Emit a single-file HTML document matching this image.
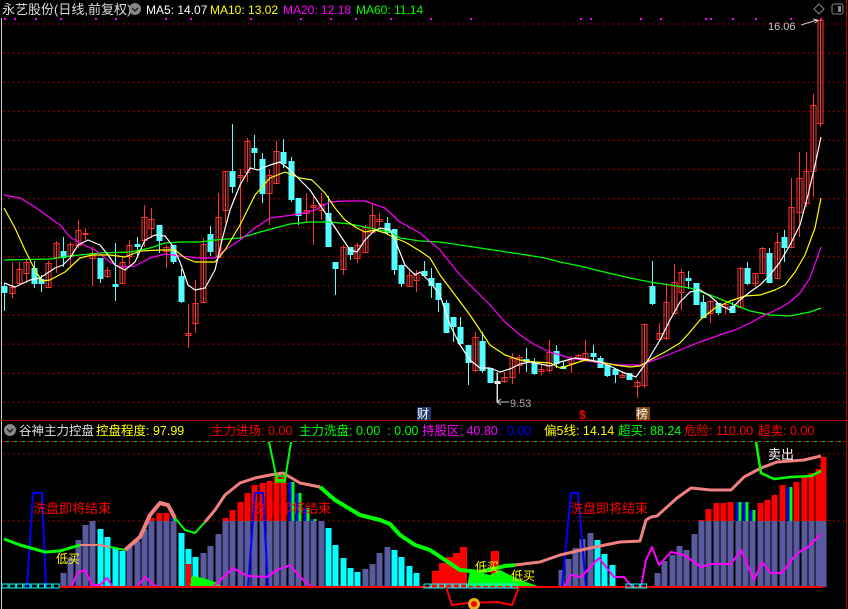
<!DOCTYPE html>
<html><head><meta charset="utf-8">
<style>
html,body{margin:0;padding:0;background:#000;width:848px;height:609px;overflow:hidden}
svg{display:block}
text{font-family:"Liberation Sans","Noto Sans CJK SC",sans-serif}
</style></head>
<body>
<svg id="s" width="848" height="609" viewBox="0 0 848 609" xmlns="http://www.w3.org/2000/svg">
<rect width="848" height="609" fill="#000"/>
<line x1="1.5" y1="18" x2="1.5" y2="609" stroke="#ccc" stroke-width="1"/>
<line x1="846.5" y1="0" x2="846.5" y2="609" stroke="#a00" stroke-width="1"/>
<g id="grid"></g>
<g id="main"></g>
<g id="ind"></g>
<!-- header -->
<text x="2" y="14" font-size="13" fill="#ddd">永艺股份(日线,前复权)</text>
<circle cx="135" cy="9" r="6" fill="#888"/><path d="M132 8l3 3 3-3" stroke="#222" stroke-width="1.5" fill="none"/>
<text x="146" y="14" font-size="12" fill="#fff">MA5: 14.07</text>
<text x="210" y="14" font-size="12" fill="#ff0">MA10: 13.02</text>
<text x="283" y="14" font-size="12" fill="#f0f">MA20: 12.18</text>
<text x="356" y="14" font-size="12" fill="#0f0">MA60: 11.14</text>
<path d="M819 4l5 5-5 5-5-5z" stroke="#888" fill="none"/>
<rect x="832" y="4" width="11" height="10" rx="2" stroke="#888" fill="none"/><rect x="838" y="6" width="3" height="6" fill="#888"/>
<text x="768" y="30" font-size="11" fill="#ccc">16.06</text>
<path d="M801 25l16-5M813 19l5 1-3 3" stroke="#ccc" fill="none"/>
<path d="M497 372v30h12M501 399l-4 3 4 3" stroke="#ccc" fill="none"/>
<text x="510" y="407" font-size="11" fill="#aaa">9.53</text>
<rect x="417" y="407" width="14" height="13" fill="#1c3a6a"/><text x="417" y="418" font-size="12" fill="#fff">财</text>
<text x="579" y="419" font-size="12" fill="#f00" font-weight="bold">$</text>
<rect x="636" y="407" width="14" height="13" fill="#7a4a10"/><text x="636" y="418" font-size="12" fill="#fff">榜</text>
<!-- indicator header -->
<line x1="0" y1="420.5" x2="848" y2="420.5" stroke="#b00"/>
<circle cx="10" cy="430" r="6" fill="#888"/><path d="M7 429l3 3 3-3" stroke="#222" stroke-width="1.5" fill="none"/>
<text x="19" y="435" font-size="12.5" fill="#ddd">谷神主力控盘</text>
<text x="96" y="435" font-size="12.5" fill="#ff0">控盘程度: 97.99</text>
<text x="211" y="435" font-size="12.5" fill="#f00">主力进场: 0.00</text>
<text x="299" y="435" font-size="12.5" fill="#0f0">主力洗盘: 0.00 &#160;: 0.00</text>
<text x="422" y="435" font-size="12.5" fill="#f0f">持股区: 40.80</text>
<text x="500" y="435" font-size="12.5" fill="#00f">: 0.00</text>
<text x="544" y="435" font-size="12.5" fill="#ff0">偏5线: 14.14</text>
<text x="618" y="435" font-size="12.5" fill="#0f0">超买: 88.24</text>
<text x="684" y="435" font-size="12.5" fill="#f00">危险: 110.00</text>
<text x="758" y="435" font-size="12.5" fill="#f00">超卖: 0.00</text>
<g id="txt">
<text x="33" y="513" font-size="13" fill="#f00">洗盘即将结束</text>
<text x="253" y="513" font-size="13" fill="#f00">洗盘即将结束</text>
<text x="570" y="513" font-size="13" fill="#f00">洗盘即将结束</text>
<text x="56" y="563" font-size="12" fill="#ff0">低买</text>
<text x="475" y="571" font-size="12" fill="#ff0">低买</text>
<text x="511" y="580" font-size="12" fill="#ff0">低买</text>
<text x="768" y="459" font-size="13" fill="#fff">卖出</text>
</g>
</svg>
<script>
var NS="http://www.w3.org/2000/svg";
function el(p,t,a){var e=document.createElementNS(NS,t);for(var k in a)e.setAttribute(k,a[k]);document.getElementById(p).appendChild(e);return e;}
// grid
for(var k=0;k<14;k++){var y=24+k*29.1;el("grid","line",{x1:3,x2:846,y1:y,y2:y,stroke:"#c00","stroke-dasharray":"1.5 3.5","stroke-width":1});}
[454,521].forEach(function(y){el("grid","line",{x1:3,x2:846,y1:y,y2:y,stroke:"#c00","stroke-dasharray":"1.5 3.5"});});
el("grid","line",{x1:3,x2:846,y1:441.5,y2:441.5,stroke:"#c00","stroke-dasharray":"5 3"});
el("grid","line",{x1:6,x2:846,y1:441.5,y2:441.5,stroke:"#0c0","stroke-dasharray":"3 5"});
// magenta top dots
[4,14,35,60,95,115,165,190,250,300,330,355,390,430,470,580,590,640,660,705,710,732,755,790,820].forEach(function(x){el("grid","rect",{x:x,y:18,width:2,height:2,fill:"#f0f"});});
// candles: [x, bodyTop, bodyBot, high, low, type] type r=red c=cyan w=white
var C=[[4,286,292,283,311,"c"],[12,287,293,262,298,"r"],[19,269,283,262,283,"r"],[26,262,273,258,283,"r"],[34,268,283,261,288,"c"],[41,279,283,275,292,"c"],[48,263,287,261,287,"r"],[56,243,257,241,273,"r"],[63,251,257,237,267,"c"],[70,244,256,242,266,"r"],[78,230,245,220,248,"r"],[85,233,234,228,240,"r"],[92,253,258,247,286,"r"],[100,258,278,258,283,"c"],[107,270,276,267,278,"r"],[115,284,286,243,301,"c"],[122,262,283,257,283,"r"],[129,245,256,240,265,"r"],[137,244,246,237,258,"c"],[144,217,240,205,247,"r"],[151,219,228,208,238,"r"],[159,225,240,225,253,"c"],[166,247,251,245,268,"r"],[173,245,261,245,264,"c"],[181,276,301,269,303,"c"],[188,333,335,304,348,"r"],[195,303,323,280,333,"r"],[203,244,302,238,302,"r"],[210,234,251,226,256,"c"],[218,217,257,193,257,"r"],[225,171,210,171,223,"r"],[232,171,186,124,193,"c"],[240,175,177,169,240,"r"],[247,141,172,138,182,"r"],[254,148,152,135,168,"c"],[262,159,193,153,203,"c"],[269,175,193,169,225,"r"],[276,151,183,141,183,"r"],[283,152,163,139,168,"c"],[291,161,199,157,202,"c"],[298,198,215,198,225,"c"],[306,210,213,193,223,"r"],[313,205,207,195,245,"r"],[321,204,210,193,220,"r"],[328,213,246,196,246,"c"],[335,262,268,262,295,"c"],[343,247,269,245,275,"r"],[350,247,254,247,260,"c"],[357,245,258,243,263,"r"],[365,227,252,225,252,"r"],[372,215,232,203,232,"r"],[379,219,221,213,226,"r"],[387,223,232,217,234,"c"],[394,229,269,229,275,"c"],[401,265,283,265,287,"c"],[409,275,286,270,287,"r"],[416,273,280,270,292,"r"],
[424,271,275,261,275,"c"],[431,278,285,268,298,"c"],[438,283,299,283,312,"c"],[446,303,332,300,332,"c"],[453,317,326,317,342,"c"],[460,327,343,317,345,"c"],[468,345,362,345,385,"c"],[475,337,370,332,372,"r"],[482,341,370,332,373,"c"],[490,368,382,368,383,"c"],[497,381,383,373,403,"w"],[504,377,381,372,383,"r"],[512,358,377,353,384,"r"],[519,357,365,355,373,"r"],[526,359,361,348,372,"c"],[534,363,373,358,375,"c"],[541,369,371,365,375,"r"],[549,352,370,340,372,"r"],[556,351,363,345,368,"c"],[563,366,368,362,369,"c"],[571,358,363,356,373,"r"],[578,355,358,354,359,"r"],[585,353,358,340,362,"r"],[593,353,356,345,362,"c"],[600,358,367,356,368,"c"],[607,365,375,365,377,"c"],[615,369,374,369,383,"c"],[622,375,377,372,378,"r"],[629,373,379,373,380,"c"],[637,382,386,380,398,"r"],[644,324,385,324,388,"r"],[652,286,303,261,305,"c"],[659,333,339,323,340,"r"],[666,302,338,283,340,"r"],[674,282,313,264,313,"r"],[681,272,292,269,310,"r"],[688,278,280,271,289,"c"],[696,283,304,283,305,"c"],[703,302,317,295,317,"c"],[710,301,313,300,323,"r"],[718,303,312,303,315,"c"],[725,304,307,303,314,"r"],[732,306,312,302,312,"c"],[740,268,307,267,308,"r"],[747,268,283,262,285,"c"],[755,273,283,273,287,"r"],[762,248,273,247,273,"r"],[769,253,282,248,282,"c"],[777,242,278,233,278,"r"],[784,237,247,230,262,"c"],[791,207,247,178,247,"r"],[799,178,212,152,237,"r"],[806,171,203,152,207,"r"],[813,105,171,94,197,"r"],[820,20,123,19,127,"r"]];
C.forEach(function(c){
 var x=c[0],col=c[5]=="r"?"#ff3232":(c[5]=="c"?"#54ffff":"#fff");
 el("main","line",{x1:x+.5,x2:x+.5,y1:c[3],y2:c[4],stroke:col});
 var h=Math.max(c[2]-c[1],1);
 if(c[5]=="r") el("main","rect",{x:x-2,y:c[1]+.5,width:5,height:h,fill:"none",stroke:col});
 else el("main","rect",{x:x-2.5,y:c[1],width:6,height:h+1,fill:col});
});
function pl(g,pts,col,w){el(g,"polyline",{points:pts.map(function(p){return p.join(",")}).join(" "),fill:"none",stroke:col,"stroke-width":w||1,"stroke-linejoin":"round"});}
pl("main",[[4,260],[50,259],[70,256],[100,253],[130,252],[150,248],[165,243],[180,242],[200,242],[215,240],[240,238],[260,232],[275,228],[290,224],[310,222],[330,222],[350,224],[370,228],[390,232],[400,238],[420,241],[440,242],[460,245],[480,248],[500,251],[520,254],[545,258],[560,262],[580,266],[600,271],[630,278],[650,282],[670,285],[690,288],[710,295],[730,303],[750,311],[770,315],[790,316],[810,312],[821,308]],"#0f0",1.3);
pl("main",[[4,195],[20,198],[35,207],[50,218],[60,225],[70,237],[80,243],[95,250],[110,262],[120,267],[135,266],[150,258],[165,254],[180,256],[200,258],[215,258],[225,250],[240,240],[255,228],[270,218],[285,216],[300,214],[315,210],[330,202],[345,201],[365,201],[385,208],[400,222],[420,233],[440,250],[460,275],[475,290],[490,305],[505,322],[520,335],[535,345],[550,352],[570,358],[600,363],[620,365],[640,365],[660,358],[680,350],[700,342],[720,335],[735,330],[750,323],[765,315],[780,308],[790,302],[800,293],[810,278],[821,247]],"#f0f",1.2);
pl("main",[[4,208],[15,228],[25,250],[35,270],[42,281],[50,280],[65,272],[80,258],[92,255],[110,255],[125,257],[140,251],[160,250],[175,250],[185,258],[195,262],[215,262],[225,250],[240,225],[255,195],[270,178],[285,172],[300,178],[312,180],[325,193],[335,208],[345,220],[357,228],[365,232],[375,230],[385,233],[395,238],[405,242],[420,251],[430,258],[440,275],[455,295],[470,315],[480,330],[490,345],[505,355],[520,360],[535,362],[550,363],[560,368],[570,365],[585,360],[600,362],[615,365],[630,367],[640,366],[650,360],[665,352],[680,343],[690,332],[700,320],[715,308],[730,301],[745,296],[760,295],[775,290],[785,285],[795,272],[805,255],[815,228],[821,198]],"#ff0",1.2);
pl("main",[[4,283],[15,287],[30,280],[40,278],[55,268],[63,265],[70,258],[78,245],[88,240],[100,245],[108,255],[115,265],[125,270],[135,262],[145,240],[155,235],[165,236],[172,245],[180,262],[188,285],[195,290],[205,288],[215,270],[222,240],[230,210],[240,185],[250,168],[258,170],[270,165],[280,162],[290,170],[300,180],[310,190],[320,205],[330,220],[340,235],[350,250],[357,252],[365,240],[373,232],[380,228],[390,230],[397,245],[405,265],[415,275],[420,272],[430,282],[440,295],[450,325],[460,345],[470,360],[480,368],[490,368],[500,372],[510,369],[520,364],[530,362],[540,364],[550,366],[560,362],[575,358],[590,360],[600,362],[612,367],[622,372],[636,377],[648,360],[660,340],[670,320],[680,302],[690,292],[700,290],[710,296],[720,305],[730,310],[740,300],[750,292],[760,285],[770,275],[780,262],[790,245],[800,225],[808,195],[815,165],[821,137]],"#fff",1.2);
// indicator bars [x, top, type] s=slate r=red(red above 521 slate below) c=cyan g=blue/green
var B=[[63,573,"s"],[70,558,"s"],[78,540,"s"],[85,525,"s"],[92,521,"s"],[100,529,"c"],[107,537,"c"],[115,548,"c"],[122,551,"c"],[129,546,"s"],[137,541,"s"],[144,529,"s"],[151,518,"r"],[159,513,"r"],[166,513,"r"],[173,518,"g"],[181,533,"c"],[188,549,"c"],[195,557,"c"],[203,553,"s"],[210,546,"s"],[218,534,"s"],[225,518,"r"],[232,510,"r"],[240,502,"r"],[247,493,"r"],[254,485,"r"],[262,483,"r"],[269,481,"r"],[276,477,"r"],[283,477,"r"],[291,482,"g"],[298,493,"g"],[306,508,"g"],[313,519,"g"],[321,521,"s"],[328,528,"c"],[335,545,"c"],[343,558,"c"],[350,568,"c"],[357,572,"c"],[365,569,"s"],[372,564,"s"],[379,553,"s"],[387,547,"s"],[394,550,"c"],[401,557,"c"],[409,566,"c"],[416,573,"c"],
[561,570,"s"],[568,559,"s"],[575,548,"s"],[582,539,"s"],[590,533,"s"],[597,540,"c"],[604,554,"c"],[612,565,"c"],
[657,573,"s"],[664,561,"s"],[672,555,"s"],[679,546,"s"],[686,550,"s"],[694,534,"s"],[701,520,"r"],[708,509,"r"],[716,503,"r"],[723,503,"r"],[730,502,"r"],[738,502,"g"],[745,502,"g"],[752,510,"g"],[760,503,"r"],[767,500,"r"],[774,495,"r"],[782,485,"r"],[789,487,"g"],[796,482,"r"],[804,477,"r"],[811,473,"r"],[818,469,"r"],[823,457,"r"]];
var SL="#5a5a9e";
B.forEach(function(b){var x=b[0]-2.5,w=6;
 if(b[2]=="s")el("ind","rect",{x:x,y:b[1],width:w,height:587-b[1],fill:SL});
 else if(b[2]=="c")el("ind","rect",{x:x,y:b[1],width:w,height:587-b[1],fill:"#0ff"});
 else{el("ind","rect",{x:x,y:521,width:w,height:66,fill:SL});
  if(b[2]=="r")el("ind","rect",{x:x,y:b[1],width:w,height:521-b[1],fill:"#f00"});
  else{el("ind","rect",{x:x,y:b[1],width:3,height:521-b[1],fill:"#00f"});el("ind","rect",{x:x+3,y:b[1],width:3,height:521-b[1],fill:"#0f0"});}}
});
// red/green area mid
[[186,564,5,"#f00"],[432,571,7,"#f00"],[439,563,7,"#f00"],[446,557,7,"#f00"],[453,553,7,"#f00"],[460,547,7,"#f00"],[491,551,8,"#f00"]].forEach(function(r){el("ind","rect",{x:r[0],y:r[1],width:r[2],height:587-r[1],fill:r[3]});});
el("ind","polygon",{points:"190,587 192,576 203,578 215,582 222,587",fill:"#0f0"});
el("ind","polygon",{points:"467,587 470,570 490,575 500,570 510,575 520,580 535,585 540,587",fill:"#0f0"});
// blue spikes
pl("ind",[[27,587],[33,493],[42,493],[46,587]],"#00f",2);
pl("ind",[[248,587],[255,493],[263,493],[268,587]],"#00f",2);
pl("ind",[[562,587],[571,493],[578,493],[586,587]],"#00f",2);
// salmon / green thick line
pl("ind",[[4,539],[20,545],[45,552],[60,551],[80,545]],"#0f0",3);
pl("ind",[[80,545],[100,545],[110,547]],"#f08080",2);
pl("ind",[[110,547],[125,550]],"#0f0",2);
pl("ind",[[125,550],[140,537],[150,515],[160,503],[168,505],[175,518]],"#f08080",4);
pl("ind",[[175,518],[185,530],[195,533],[205,522]],"#0f0",2);
pl("ind",[[205,522],[215,510],[225,495],[240,483],[255,478],[270,475],[283,473],[300,483],[320,487]],"#f08080",3);
pl("ind",[[320,487],[335,500],[360,515],[380,520],[390,524],[400,535],[415,545],[430,550],[460,570],[480,572],[505,566],[515,565]],"#0f0",4);
pl("ind",[[515,565],[540,562],[560,555],[590,548],[620,542],[640,541],[646,520],[651,517],[657,516],[677,498],[691,488],[711,490],[731,490],[744,477],[761,468],[777,462],[804,460],[821,456]],"#f08080",3);
pl("ind",[[756,442],[761,473],[774,479],[791,477],[811,476],[821,471]],"#0f0",2.5);
pl("ind",[[269,442],[277,480],[285,480],[291,442]],"#0f0",2);
el("ind","rect",{x:276,y:476,width:9,height:6,fill:"none",stroke:"#0f0","stroke-width":1.5});
// magenta lines
pl("ind",[[72,587],[77,573],[85,570],[92,585],[100,585],[107,578],[113,587]],"#f0f",2);
pl("ind",[[137,587],[145,577],[157,587]],"#f0f",2);
pl("ind",[[213,587],[233,568],[247,576],[267,577],[277,570],[290,565],[300,577],[312,587]],"#f0f",2);
pl("ind",[[564,587],[571,575],[581,577],[599,558],[614,577],[624,577],[632,587]],"#f0f",2);
pl("ind",[[641,587],[646,560],[652,547],[659,565],[671,552],[684,555],[701,567],[711,564],[731,564],[741,550],[754,580],[762,562],[771,573],[782,573],[794,557],[802,550],[807,548],[821,534]],"#f0f",2);
// baseline
el("ind","line",{x1:60,x2:823,y1:587,y2:587,stroke:"#f00","stroke-width":2});
// cyan boxes
function boxes(x0,x1){for(var x=x0;x<x1;x+=7.3)el("ind","rect",{x:x,y:584,width:6,height:4,fill:"none",stroke:"#0ff","stroke-width":1});}
boxes(2,58);boxes(424,516);boxes(626,645);
// red under curve + coin
pl("ind",[[446,587],[452,605],[467,603],[497,602],[512,605],[519,587]],"#f00",2);
el("ind","circle",{cx:474,cy:604,r:6,fill:"#e8b020"});
el("ind","circle",{cx:474,cy:604,r:3,fill:"#f00"});
</script>
</body></html>
